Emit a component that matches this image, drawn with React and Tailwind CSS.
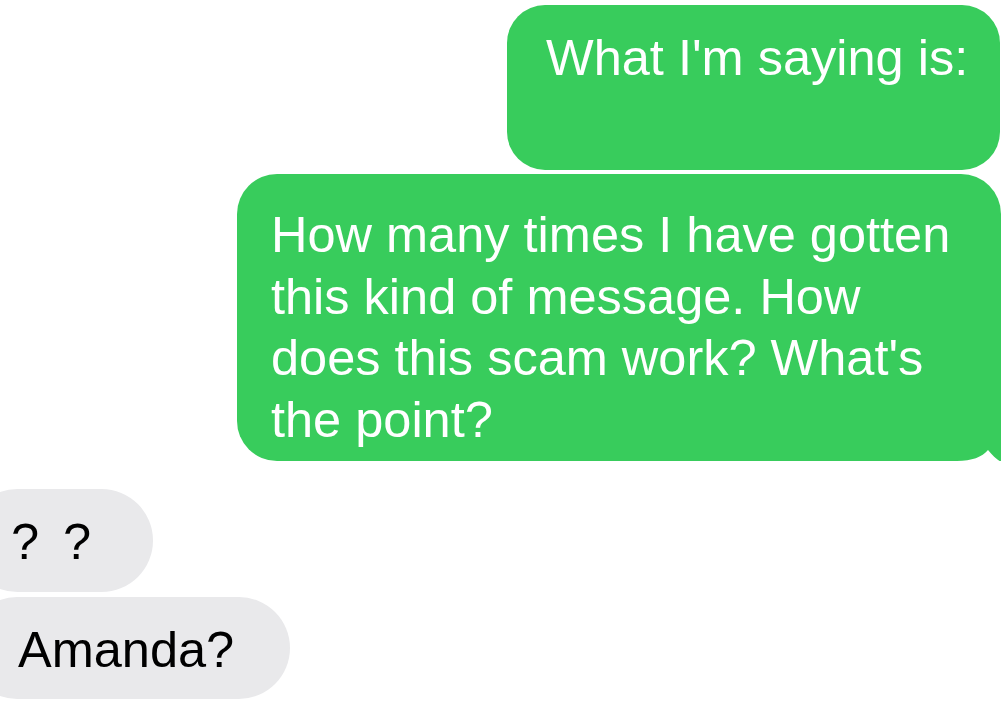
import React from 'react';

const font = { fontFamily: '"Liberation Sans", Arial, sans-serif' };

const App = () => {
  return (
    <div
      className="w-full h-[702px] bg-white overflow-hidden flex flex-col text-[50.5px] leading-[61.5px]"
      style={font}
    >
      {/* sent */}
      <div className="flex justify-end mt-[5px] pr-[1px]">
        <div className="w-[493px] bg-[#38cc5c] text-white rounded-[38px] pl-[39px] pt-[22px] pb-[20px]">
          What I'm saying is:
          <br />
          {'\u00a0'}
        </div>
      </div>

      <div className="flex justify-end mt-[4px]">
        <div className="relative w-[764px] bg-[#38cc5c] text-white rounded-[40px] rounded-br-none pl-[34px] pr-[30px] pt-[30px] pb-[11px]">
          How many times I have gotten this kind of message. How does this scam work? What's the point?
          <svg
            className="absolute right-0 bottom-[-2px]"
            width="44"
            height="16"
            viewBox="0 0 44 16"
          >
            <path d="M0 14 C15 14 25 10 31 3 C35 8 39 12 44 15 L44 16 L0 16 Z" fill="#ffffff" />
          </svg>
        </div>
      </div>

      {/* received */}
      <div className="flex mt-[28px]">
        <div className="-ml-[34px] w-[187px] bg-[#e9e9eb] text-black rounded-full pl-[45px] pt-[22px] pb-[19px] [word-spacing:10px]">
          ? ?
        </div>
      </div>

      <div className="flex mt-[5px]">
        <div className="-ml-[34px] w-[324px] bg-[#e9e9eb] text-black rounded-full pl-[52px] pt-[22px] pb-[19px]">
          Amanda?
        </div>
      </div>
    </div>
  );
};

export default App;
